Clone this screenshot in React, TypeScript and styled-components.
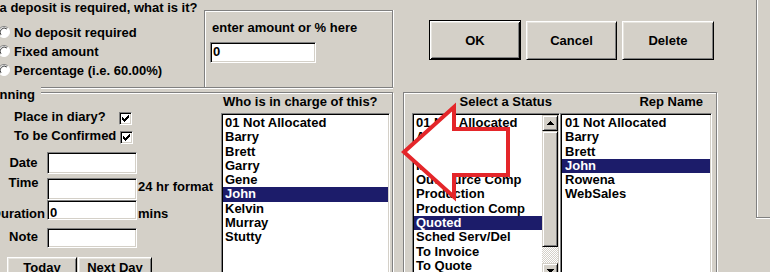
import React from 'react';
import styled, { createGlobalStyle, css } from 'styled-components';

// --------------------------------------------------------------- //
//                        Palette & bevels                          //
// --------------------------------------------------------------- //

const FACE = '#d4d0c8';
const SHADOW = '#808080';
const LIGHT = '#e6e4de';
const HILITE = '#1c1c6a';
const ARROW_RED = '#e4262a';

const GlobalStyle = createGlobalStyle`
  html, body {
    margin: 0;
    padding: 0;
    background: ${FACE};
  }
`;

// sunken white field (edit boxes, list boxes)
const sunken = css`
  background: #fff;
  border: 1px solid;
  border-color: ${SHADOW} #fff #fff ${SHADOW};
  box-shadow: inset 1px 1px 0 #000, inset -1px -1px 0 ${FACE};
`;

// raised push button
const raised = css`
  background: ${FACE};
  border: 1px solid;
  border-color: #fff #000 #000 #fff;
  box-shadow: inset 1px 1px 0 ${LIGHT}, inset -1px -1px 0 ${SHADOW};
`;

// etched group frame (dark line + white line)
const etched = css`
  border: 1px solid ${SHADOW};
  box-shadow: inset 1px 1px 0 #fff, 1px 1px 0 #fff;
`;

// --------------------------------------------------------------- //
//                       Styled Components                          //
// --------------------------------------------------------------- //

const Screen = styled.div`
  position: relative;
  width: 770px;
  height: 272px;
  overflow: hidden;
  display: flex;
  align-items: flex-start;
  background: ${FACE};
  font-family: "Liberation Sans", Arial, sans-serif;
  font-weight: bold;
  font-size: 13px;
  line-height: 15px;
  color: #000;
`;

const LeftColumn = styled.div`
  width: 397px;
  flex: none;
  display: flex;
  flex-direction: column;
`;

const MiddleColumn = styled.div`
  width: 359px;
  flex: none;
  display: flex;
  flex-direction: column;
`;

// the frame of the next panel, only its corner shows on the right
const SideFrame = styled.div`
  width: 14px;
  height: 218px;
  flex: none;
  box-sizing: border-box;
  border-left: 1px solid ${SHADOW};
  border-bottom: 1px solid ${SHADOW};
  box-shadow: inset 1px 0 0 #fff, 0 1px 0 #fff;
`;

// ---- deposit ----

const DepositGroup = styled.div`
  width: 393px;
  height: 88px;
  box-sizing: border-box;
  display: flex;
  border-bottom: 1px solid ${SHADOW};
  box-shadow: 0 1px 0 #fff;
`;

const DepositChoices = styled.div`
  width: 204px;
  flex: none;
  display: flex;
  flex-direction: column;
`;

const Caption = styled.div<{ $shift: number }>`
  margin-left: ${(p) => p.$shift}px;
  white-space: nowrap;
`;

const RadioList = styled.div`
  margin-top: 7.5px;
`;

const RadioRow = styled.div`
  display: flex;
  align-items: center;
  height: 19px;
  gap: 4px;
  white-space: nowrap;
  svg {
    margin-left: -2px;
    flex: none;
  }
`;

const AmountGroup = styled.div`
  width: 189px;
  flex: none;
  box-sizing: border-box;
  margin-top: 10px;
  padding: 9px 0 0 7px;
  border: 1px solid ${SHADOW};
  border-bottom: none;
  box-shadow: inset 1px 1px 0 #fff, 1px 0 0 #fff;
`;

const TextField = styled.div<{ $w: number; $h: number; $pt?: number }>`
  ${sunken}
  box-sizing: border-box;
  width: ${(p) => p.$w}px;
  height: ${(p) => p.$h}px;
  padding: ${(p) => p.$pt ?? 1}px 2px 0 2px;
  line-height: 15px;
  white-space: nowrap;
  overflow: hidden;
`;

const AmountField = styled(TextField)`
  margin: 7px 0 0 -2px;
`;

// ---- planning ----

const PlanningGroup = styled.div`
  ${etched}
  margin: 4px 0 0 -28px;
  width: 421px;
  height: 200px;
  box-sizing: border-box;
  padding: 0 2px 0 27px;
  display: flex;
`;

const FormColumn = styled.div`
  width: 221px;
  flex: none;
  display: flex;
  flex-direction: column;
`;

const PlanningCaption = styled.div`
  position: relative;
  align-self: flex-start;
  margin: -6px 0 0 -20px;
  padding-right: 6px;
  background: ${FACE};
  white-space: nowrap;
`;

const CheckRow = styled.div<{ $gap: number; $mt: number }>`
  display: flex;
  align-items: flex-start;
  height: 19px;
  margin-top: ${(p) => p.$mt}px;
  padding-left: 14px;
  gap: ${(p) => p.$gap}px;
  white-space: nowrap;
`;

const CheckBox = styled.div`
  ${sunken}
  width: 13px;
  height: 13px;
  box-sizing: border-box;
  margin-top: 3px;
  flex: none;
  display: flex;
  align-items: center;
  justify-content: center;
`;

const FieldRow = styled.div<{ $h: number; $mt: number }>`
  display: grid;
  grid-template-columns: 47px 90px auto;
  height: ${(p) => p.$h}px;
  margin-top: ${(p) => p.$mt}px;
`;

const FieldLabel = styled.div<{ $top: number; $end?: boolean }>`
  display: flex;
  justify-content: ${(p) => (p.$end ? 'flex-end' : 'center')};
  padding-right: ${(p) => (p.$end ? 2 : 0)}px;
  margin-top: ${(p) => p.$top}px;
  white-space: nowrap;
  min-width: 0;
`;

const FieldSuffix = styled.div<{ $top: number }>`
  margin-top: ${(p) => p.$top}px;
  padding-left: 1px;
  white-space: nowrap;
`;

const DayButtons = styled.div`
  display: flex;
  gap: 1px;
  margin-top: 9px;
  padding-left: 7px;
`;

const SmallButton = styled.div<{ $w: number }>`
  ${raised}
  width: ${(p) => p.$w}px;
  height: 24px;
  box-sizing: border-box;
  padding-top: 2px;
  text-align: center;
  white-space: nowrap;
`;

// ---- list boxes ----

const ListColumn = styled.div<{ $w: number }>`
  width: ${(p) => p.$w}px;
  flex: none;
  display: flex;
  flex-direction: column;
`;

const ListHeader = styled.div<{ $right?: boolean; $pad: number }>`
  height: 20px;
  box-sizing: border-box;
  padding-top: 1px;
  text-align: ${(p) => (p.$right ? 'right' : 'left')};
  padding-left: ${(p) => (p.$right ? 0 : p.$pad)}px;
  padding-right: ${(p) => (p.$right ? p.$pad : 0)}px;
  white-space: nowrap;
`;

const ListBox = styled.div<{ $w: number }>`
  ${sunken}
  width: ${(p) => p.$w}px;
  height: 168px;
  box-sizing: border-box;
  padding: 1px;
  display: flex;
  overflow: hidden;
`;

const ListItems = styled.div`
  flex: 1;
  min-width: 0;
  padding-top: 1px;
`;

const ListItem = styled.div<{ $selected: boolean; $pad: number }>`
  height: 14.3px;
  line-height: 14.3px;
  padding-left: ${(p) => p.$pad}px;
  white-space: nowrap;
  ${(p) => p.$selected && css`
    background: ${HILITE};
    color: #fff;
  `}
`;

const ScrollBar = styled.div`
  width: 16px;
  flex: none;
  display: flex;
  flex-direction: column;
  background: repeating-conic-gradient(#fff 0 25%, ${FACE} 0 50%) 0 0 / 2px 2px;
`;

const ScrollButton = styled.div`
  background: ${FACE};
  border: 1px solid;
  border-color: ${FACE} #000 #000 ${FACE};
  box-shadow: inset 1px 1px 0 #fff, inset -1px -1px 0 ${SHADOW};
  height: 16px;
  box-sizing: border-box;
  display: flex;
  align-items: center;
  justify-content: center;
`;

const ScrollThumb = styled(ScrollButton)`
  height: 116px;
`;

const ScrollGap = styled.div`
  flex: 1;
`;

// ---- right side ----

const ButtonBar = styled.div`
  height: 92px;
  box-sizing: border-box;
  padding: 20px 0 0 32px;
`;

const ButtonRow = styled.div`
  display: flex;
  align-items: flex-end;
  gap: 5px;
`;

const PushButton = styled.div<{ $w: number; $h: number; $default?: boolean }>`
  ${raised}
  width: ${(p) => p.$w}px;
  height: ${(p) => p.$h}px;
  box-sizing: border-box;
  display: flex;
  align-items: center;
  justify-content: center;
  ${(p) => p.$default && css`
    border-color: #000;
    box-shadow: inset 1px 1px 0 #fff, inset -1px -1px 0 #000,
      inset 2px 2px 0 ${LIGHT}, inset -2px -2px 0 ${SHADOW};
  `}
`;

const StatusGroup = styled.div`
  ${etched}
  margin-left: 6px;
  width: 314px;
  height: 190px;
  box-sizing: border-box;
  padding-left: 8px;
  display: flex;
`;

const ArrowOverlay = styled.svg`
  position: absolute;
  left: 0;
  top: 0;
  pointer-events: none;
`;

// --------------------------------------------------------------- //
//                         Sub Components                           //
// --------------------------------------------------------------- //

const Radio = () => (
  <svg width="12" height="12" viewBox="0 0 12 12">
    <circle cx="6" cy="6" r="5.5" fill="#fff" />
    <path d="M2.1 9.9A5.5 5.5 0 0 1 9.9 2.1" fill="none" stroke={SHADOW} />
    <path d="M3 8.9A4.2 4.2 0 0 1 8.9 3" fill="none" stroke="#404040" />
    <path d="M9.9 2.1A5.5 5.5 0 0 1 2.1 9.9" fill="none" stroke="#fff" />
  </svg>
);

// pixel rows of the classic check mark: [row, from, to]
const CHECK_RUNS: [number, number, number][] = [
  [0, 6, 6], [1, 5, 6], [2, 0, 0], [2, 4, 6], [3, 0, 1],
  [3, 3, 5], [4, 0, 4], [5, 1, 3], [6, 2, 2],
];
const checkPath = CHECK_RUNS
  .map(([r, a, b]) => `M${a} ${r}h${b - a + 1}v1h${-(b - a + 1)}z`)
  .join('');

const Check = () => (
  <CheckBox>
    <svg width="7" height="7" viewBox="0 0 7 7">
      <path d={checkPath} fill="#000" />
    </svg>
  </CheckBox>
);

const ScrollArrow = ({ down }: { down?: boolean }) => (
  <svg width="7" height="4" viewBox="0 0 7 4" style={down ? { transform: 'scaleY(-1)' } : undefined}>
    <path d="M3 0h1v1h-1zM2 1h3v1h-3zM1 2h5v1h-5zM0 3h7v1h-7z" fill="#000" />
  </svg>
);

interface ListProps {
  items: string[];
  selected: string;
  width: number;
  pad: number;
  scroll?: boolean;
}

const List = ({ items, selected, width, pad, scroll }: ListProps) => (
  <ListBox $w={width}>
    <ListItems>
      {items.map((item) => (
        <ListItem key={item} $selected={item === selected} $pad={pad}>{item}</ListItem>
      ))}
    </ListItems>
    {scroll && (
      <ScrollBar>
        <ScrollButton><ScrollArrow /></ScrollButton>
        <ScrollThumb />
        <ScrollGap />
        <ScrollButton><ScrollArrow down /></ScrollButton>
      </ScrollBar>
    )}
  </ListBox>
);

// --------------------------------------------------------------- //
//                         Main Component                           //
// --------------------------------------------------------------- //

const STAFF = ['01 Not Allocated', 'Barry', 'Brett', 'Garry', 'Gene', 'John', 'Kelvin', 'Murray', 'Stutty'];
const STATUSES = [
  '01 Not Allocated', 'Accepted', 'Booked', 'In Progress', 'Outsource Comp', 'Production',
  'Production Comp', 'Quoted', 'Sched Serv/Del', 'To Invoice', 'To Quote',
];
const REPS = ['01 Not Allocated', 'Barry', 'Brett', 'John', 'Rowena', 'WebSales'];

export default function App() {
  return (
    <>
      <GlobalStyle />
      <Screen>
        <LeftColumn>
          <DepositGroup>
            <DepositChoices>
              <Caption $shift={-12}>If a deposit is required, what is it?</Caption>
              <RadioList>
                <RadioRow><Radio />No deposit required</RadioRow>
                <RadioRow><Radio />Fixed amount</RadioRow>
                <RadioRow><Radio />Percentage (i.e. 60.00%)</RadioRow>
              </RadioList>
            </DepositChoices>
            <AmountGroup>
              <div>enter amount or % here</div>
              <AmountField $w={106} $h={21}>0</AmountField>
            </AmountGroup>
          </DepositGroup>

          <PlanningGroup>
            <FormColumn>
              <PlanningCaption>Planning</PlanningCaption>
              <CheckRow $gap={13} $mt={7}>Place in diary?<Check /></CheckRow>
              <CheckRow $gap={4} $mt={0}>To be Confirmed<Check /></CheckRow>

              <FieldRow $h={22} $mt={5}>
                <FieldLabel $top={3}>Date</FieldLabel>
                <TextField $w={90} $h={22} />
              </FieldRow>
              <FieldRow $h={22} $mt={4}>
                <FieldLabel $top={-3}>Time</FieldLabel>
                <TextField $w={90} $h={22} />
                <FieldSuffix $top={1}>24 hr format</FieldSuffix>
              </FieldRow>
              <FieldRow $h={20} $mt={0}>
                <FieldLabel $top={6} $end>Duration</FieldLabel>
                <TextField $w={90} $h={20} $pt={4}>0</TextField>
                <FieldSuffix $top={6}>mins</FieldSuffix>
              </FieldRow>
              <FieldRow $h={20} $mt={8}>
                <FieldLabel $top={1}>Note</FieldLabel>
                <TextField $w={90} $h={20} />
              </FieldRow>

              <DayButtons>
                <SmallButton $w={70}>Today</SmallButton>
                <SmallButton $w={74}>Next Day</SmallButton>
              </DayButtons>
            </FormColumn>

            <ListColumn $w={169}>
              <ListHeader $pad={2}>Who is in charge of this?</ListHeader>
              <List items={STAFF} selected="John" width={169} pad={2} />
            </ListColumn>
          </PlanningGroup>
        </LeftColumn>

        <MiddleColumn>
          <ButtonBar>
            <ButtonRow>
              <PushButton $w={92} $h={40} $default>OK</PushButton>
              <PushButton $w={91} $h={39}>Cancel</PushButton>
              <PushButton $w={92} $h={39}>Delete</PushButton>
            </ButtonRow>
          </ButtonBar>

          <StatusGroup>
            <ListColumn $w={148}>
              <ListHeader $right $pad={8}>Select a Status</ListHeader>
              <List items={STATUSES} selected="Quoted" width={148} pad={2} scroll />
            </ListColumn>
            <ListColumn $w={152}>
              <ListHeader $right $pad={9}>Rep Name</ListHeader>
              <List items={REPS} selected="John" width={152} pad={3} />
            </ListColumn>
          </StatusGroup>
        </MiddleColumn>

        <SideFrame />

        <ArrowOverlay width="770" height="272" viewBox="0 0 770 272">
          <polygon
            points="404,152 454,107 454,129 508,129 508,175 454,175 454,197"
            fill="#fff"
            stroke={ARROW_RED}
            strokeWidth={4}
            strokeLinejoin="miter"
          />
        </ArrowOverlay>
      </Screen>
    </>
  );
}
